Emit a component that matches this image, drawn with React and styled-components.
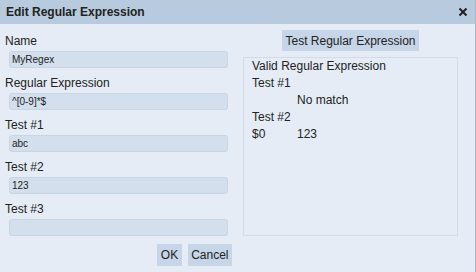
import React from "react";
import styled, { createGlobalStyle } from "styled-components";

const GlobalStyle = createGlobalStyle`
  html, body {
    margin: 0;
    padding: 0;
    background: #aeb8c4;
    font-family: "Liberation Sans", Arial, sans-serif;
  }
`;

const Dialog = styled.div`
  width: 475px;
  height: 272px;
  background: #e5ecf5;
  color: #222;
  display: flex;
  flex-direction: column;
  overflow: hidden;
`;

const TitleBar = styled.div`
  height: 24px;
  background: #b8cbde;
  display: flex;
  align-items: center;
  justify-content: space-between;
  padding: 0 7px 0 6px;
`;

const Title = styled.h1`
  margin: 0;
  font-size: 12px;
  font-weight: bold;
  color: #222;
`;

const Close = styled.button`
  border: 0;
  background: none;
  padding: 0;
  width: 10px;
  height: 10px;
  display: flex;
  cursor: pointer;
`;

const Body = styled.div`
  display: grid;
  grid-template-columns: 227px 215px;
  column-gap: 11px;
  padding: 6px 0 0 5px;
`;

const Form = styled.div`
  display: flex;
  flex-direction: column;
  padding-top: 3px;
`;

const Field = styled.div`
  display: flex;
  flex-direction: column;
  margin-bottom: 7px;
`;

const Label = styled.label`
  font-size: 12px;
  line-height: 17px;
  height: 17px;
  margin-bottom: 1px;
`;

const Input = styled.input`
  box-sizing: border-box;
  margin: 0 4px;
  height: 17px;
  width: 219px;
  border: 1px solid #c8d5e3;
  border-radius: 3px;
  background: #d3dfec;
  font-family: "Liberation Sans", Arial, sans-serif;
  font-size: 10px;
  color: #222;
  padding: 0 2px;
  outline: none;
`;

const Actions = styled.div`
  display: flex;
  justify-content: flex-end;
  gap: 6px;
  margin-top: 1px;
`;

const Button = styled.button`
  border: 0;
  background: #c6d5e7;
  font-family: "Liberation Sans", Arial, sans-serif;
  font-size: 12px;
  color: #222;
  height: ${(p) => p.$h || 22}px;
  padding: 0 ${(p) => p.$px || 3.5}px;
  cursor: pointer;
`;

const Tester = styled.div`
  display: flex;
  flex-direction: column;
  align-items: center;
`;

const Result = styled.div`
  align-self: stretch;
  box-sizing: border-box;
  height: 179px;
  margin-top: 6px;
  border: 1px solid #d2dbe7;
  padding: 0 8px;
  font-size: 12px;
  line-height: 17px;
`;

const Line = styled.div`
  display: grid;
  grid-template-columns: 45px auto;
`;

const fields = [
  { label: "Name", value: "MyRegex" },
  { label: "Regular Expression", value: "^[0-9]*$" },
  { label: "Test #1", value: "abc" },
  { label: "Test #2", value: "123" },
  { label: "Test #3", value: "" },
];

export default function App() {
  return (
    <>
      <GlobalStyle />
      <Dialog>
        <TitleBar>
          <Title>Edit Regular Expression</Title>
          <Close aria-label="Close">
            <svg width="10" height="10" viewBox="0 0 10 10">
              <path d="M1.5 1.5 L8.5 8.5 M8.5 1.5 L1.5 8.5" stroke="#222" strokeWidth="2" />
            </svg>
          </Close>
        </TitleBar>
        <Body>
          <Form>
            {fields.map((f) => (
              <Field key={f.label}>
                <Label>{f.label}</Label>
                <Input defaultValue={f.value} />
              </Field>
            ))}
            <Actions>
              <Button>OK</Button>
              <Button>Cancel</Button>
            </Actions>
          </Form>
          <Tester>
            <Button $h={21} $px={3}>Test Regular Expression</Button>
            <Result>
              <div>Valid Regular Expression</div>
              <div>Test #1</div>
              <Line><span /><span>No match</span></Line>
              <div>Test #2</div>
              <Line><span>$0</span><span>123</span></Line>
            </Result>
          </Tester>
        </Body>
      </Dialog>
    </>
  );
}
